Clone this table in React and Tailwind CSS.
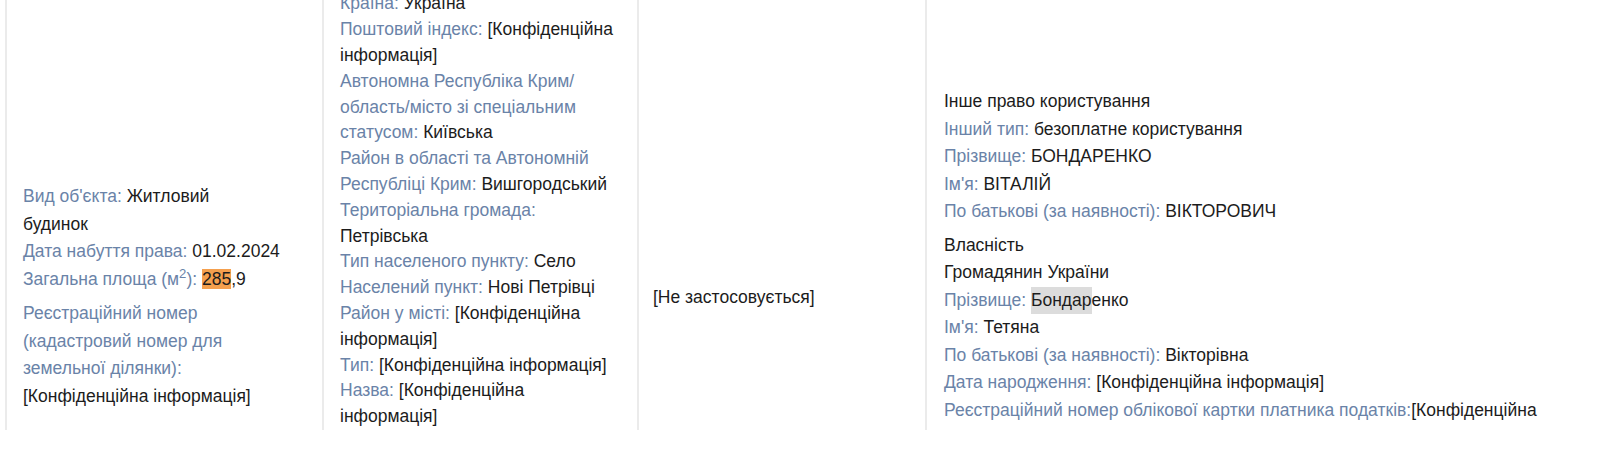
const LABEL = "text-[#6a83a8]";

function Label({ children }) {
  return <span className={LABEL}>{children}</span>;
}

export default function App() {
  return (
    <div className="h-[464px] w-[1600px] overflow-hidden bg-white font-['Liberation_Sans',Arial,sans-serif] text-[17.5px] text-[#1c1c1c]">
      <div className="flex h-[430px] overflow-hidden">

        {/* Об'єкт */}
        <div className="ml-[5px] flex w-[317px] shrink-0 flex-col border-l-2 border-[#ebebeb] pl-[16px] pt-[183px] leading-[27.5px]">
          <div>
            <Label>Вид об'єкта:</Label> Житловий<br />будинок
          </div>
          <div>
            <Label>Дата набуття права:</Label> 01.02.2024
          </div>
          <div>
            <Label>Загальна площа (м<sup>2</sup>):</Label>{" "}
            <span className="bg-[#f5a04e]">285</span>,9
          </div>
          <div className="mt-[7px]">
            <Label>Реєстраційний номер<br />(кадастровий номер для<br />земельної ділянки):</Label>
            <br />[Конфіденційна інформація]
          </div>
        </div>

        {/* Адреса */}
        <div className="flex w-[315px] shrink-0 flex-col justify-end border-l-2 border-[#ebebeb] pl-[16px] leading-[25.8px] whitespace-nowrap">
          <div><Label>Країна:</Label> Україна</div>
          <div><Label>Поштовий індекс:</Label> [Конфіденційна<br />інформація]</div>
          <div>
            <Label>Автономна Республіка Крим/<br />область/місто зі спеціальним<br />статусом:</Label> Київська
          </div>
          <div>
            <Label>Район в області та Автономній<br />Республіці Крим:</Label> Вишгородський
          </div>
          <div><Label>Територіальна громада:</Label><br />Петрівська</div>
          <div><Label>Тип населеного пункту:</Label> Село</div>
          <div><Label>Населений пункт:</Label> Нові Петрівці</div>
          <div><Label>Район у місті:</Label> [Конфіденційна<br />інформація]</div>
          <div><Label>Тип:</Label> [Конфіденційна інформація]</div>
          <div><Label>Назва:</Label> [Конфіденційна<br />інформація]</div>
        </div>

        {/* Обтяження */}
        <div className="w-[288px] shrink-0 border-l-2 border-[#ebebeb] pl-[14px] pt-[284px] leading-[27.5px]">
          [Не застосовується]
        </div>

        {/* Суб'єкти */}
        <div className="flex flex-1 flex-col border-l-2 border-[#ebebeb] pl-[17px] pt-[88px] leading-[27.5px] whitespace-nowrap">
          <div>
            <div>Інше право користування</div>
            <div><Label>Інший тип:</Label> безоплатне користування</div>
            <div><Label>Прізвище:</Label> БОНДАРЕНКО</div>
            <div><Label>Ім'я:</Label> ВІТАЛІЙ</div>
            <div><Label>По батькові (за наявності):</Label> ВІКТОРОВИЧ</div>
          </div>
          <div className="mt-[6px]">
            <div>Власність</div>
            <div>Громадянин України</div>
            <div>
              <Label>Прізвище:</Label>{" "}
              <span className="inline-block bg-[#dcdcdc]">Бондар</span>енко
            </div>
            <div><Label>Ім'я:</Label> Тетяна</div>
            <div><Label>По батькові (за наявності):</Label> Вікторівна</div>
            <div><Label>Дата народження:</Label> [Конфіденційна інформація]</div>
            <div>
              <Label>Реєстраційний номер облікової картки платника податків:</Label>[Конфіденційна
            </div>
          </div>
        </div>
      </div>
    </div>
  );
}
